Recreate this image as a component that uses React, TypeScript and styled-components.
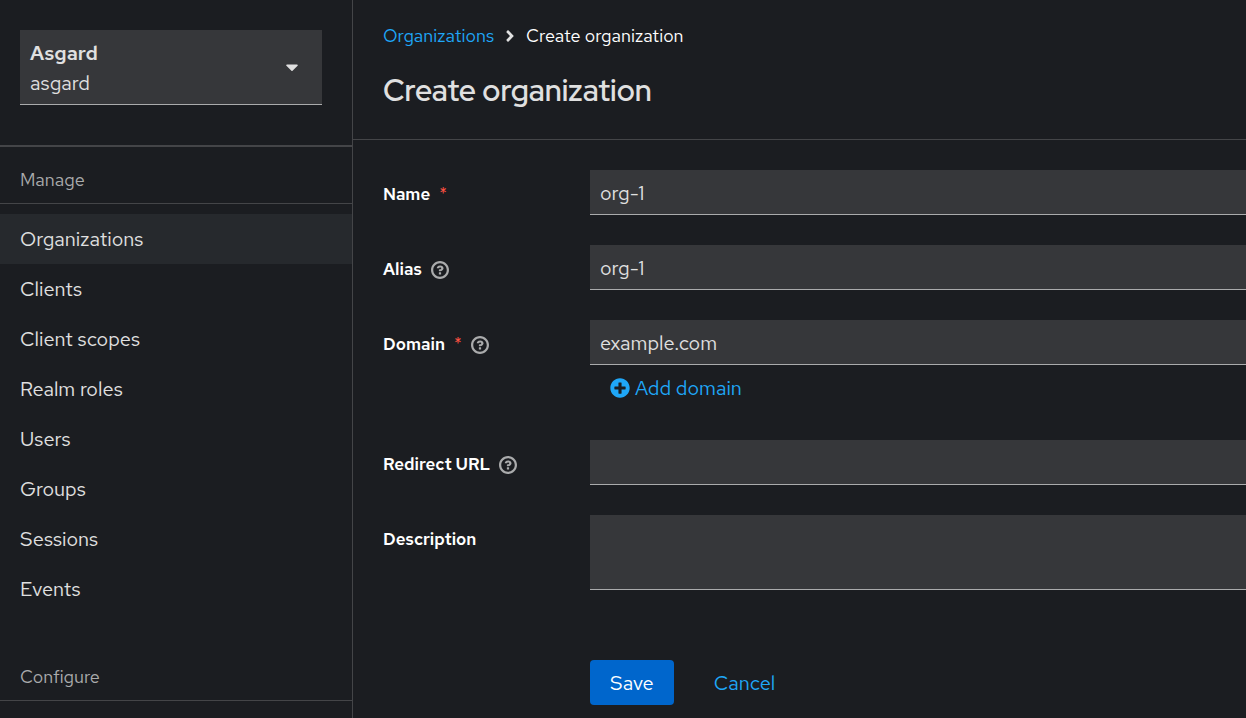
import type { ReactNode } from "react";
import styled, { createGlobalStyle } from "styled-components";
import { FaAngleRight, FaCaretDown, FaPlusCircle } from "react-icons/fa";

const color = {
  page: "#1b1d21",
  field: "#36373a",
  selected: "#26292d",
  line: "#444548",
  fieldLine: "#aaabac",
  text: "#e0e0e0",
  muted: "#aaabac",
  link: "#1fa7f8",
  primary: "#0066cc",
  required: "#fe5142",
};

const GlobalStyle = createGlobalStyle`
  *, *::before, *::after { box-sizing: border-box; }
  body {
    margin: 0;
    background: ${color.page};
    color: ${color.text};
    font-family: "Red Hat Text", Lato, sans-serif;
    font-size: 20px;
    line-height: 30px;
  }
  button, input, textarea { font: inherit; color: inherit; }
`;

const Page = styled.div`
  display: flex;
  height: 100vh;
  overflow: hidden;
`;

const Sidebar = styled.aside`
  flex: 0 0 353px;
  border-right: 1px solid ${color.line};
  overflow: hidden;
`;

const RealmArea = styled.div`
  padding: 30px 30px 40px 20px;
  border-bottom: 2px solid ${color.line};
`;

const RealmToggle = styled.button`
  display: flex;
  align-items: center;
  justify-content: space-between;
  width: 100%;
  padding: 8px 20px 6px 10px;
  border: 0;
  border-bottom: 1px solid ${color.fieldLine};
  background: ${color.field};
  text-align: left;

  svg { width: 20px; height: 20px; margin-bottom: 2px; }
`;

const RealmName = styled.span`
  display: flex;
  flex-direction: column;

  strong { font-weight: 600; }
`;

const NavSection = styled.section`
  margin-bottom: 30px;
`;

const NavTitle = styled.h2`
  margin: 0 0 10px;
  padding: 19px 20px 10px;
  border-bottom: 1px solid ${color.line};
  color: ${color.muted};
  font-size: 18px;
  font-weight: 400;
  line-height: 27px;
`;

const NavList = styled.ul`
  margin: 0;
  padding: 0;
  list-style: none;
`;

const NavLink = styled.a<{ $selected?: boolean }>`
  display: block;
  padding: 10px 20px;
  background: ${(p) => (p.$selected ? color.selected : "transparent")};
  color: inherit;
  text-decoration: none;
`;

const Main = styled.main`
  flex: 1;
  min-width: 0;
`;

const Header = styled.header`
  padding: 22px 30px 29px;
  border-bottom: 1px solid ${color.line};
`;

const Breadcrumb = styled.nav`
  display: flex;
  align-items: center;
  gap: 7px;
  color: #fff;
  font-size: 18px;
  line-height: 28px;

  a { color: ${color.link}; text-decoration: none; }
  svg { width: 18px; height: 18px; color: ${color.text}; }
`;

const Title = styled.h1`
  margin: 20px 0 0;
  font-family: "Red Hat Display", Lato, sans-serif;
  font-size: 30px;
  font-weight: 600;
  line-height: 40px;
`;

const Form = styled.form`
  display: flex;
  flex-direction: column;
  gap: 30px;
  padding: 30px 0 13px 30px;
`;

const Row = styled.div`
  display: grid;
  grid-template-columns: 207px 1fr;
`;

const LabelCell = styled.div`
  display: flex;
  align-items: center;
  gap: 9px;
  height: 45px;
  padding-top: 4px;
  color: #fff;
  font-size: 17px;
  font-weight: 600;
  line-height: 27px;
`;

const Required = styled.span`
  color: ${color.required};
  font-weight: 400;
`;

const HelpButton = styled.button`
  display: flex;
  padding: 1px 0 0;
  border: 0;
  background: none;

  svg { width: 18px; height: 18px; fill: ${color.muted}; }
`;

const Control = styled.input`
  display: block;
  width: 100%;
  height: 45px;
  padding: 2px 10px 0;
  border: 0;
  border-bottom: 1px solid ${color.fieldLine};
  border-radius: 0;
  background: ${color.field};
  outline: 0;
`;

const TextArea = styled(Control)`
  height: 75px;
  resize: none;
`;

const LinkButton = styled.button`
  display: flex;
  align-items: center;
  gap: 5px;
  height: 45px;
  padding: 0 20px;
  border: 0;
  background: none;
  color: ${color.link};

  svg { width: 20px; height: 20px; }
`;

const Actions = styled.div`
  display: flex;
  gap: 20px;
  padding: 40px 0 0 207px;
`;

const SaveButton = styled.button`
  height: 45px;
  padding: 0 20px;
  border: 0;
  border-radius: 4px;
  background: ${color.primary};
  color: #fff;
`;

const HelpIcon = () => (
  <svg viewBox="0 0 1024 1024" aria-hidden="true">
    <path d="M521.3 576C627.5 576 713.7 502 713.7 413.7S627.6 253.6 521.3 253.6C366 253.6 334.5 337.7 329.2 407.2c0 7.100 6 8.800 14.300 8.800H445c5.500 0 13-.5 15.800-9.500 0-43.900 122.100-49.400 122.100 7.100 0 28.300-26.700 57.300-61.600 59.400s-74 6.800-74 48.700v32.100c0 17 8.800 22.200 24.700 22.200zM575.300 751.300v-96a16 16 0 0 0-16-16h-96a16 16 0 0 0-16 16v96a16 16 0 0 0 16 16h96a16 16 0 0 0 16-16M512 896C300.200 896 128 723.900 128 512S300.200 128 512 128s384 172.200 384 384-172.300 384-384 384M512 0C229.700 0 0 229.800 0 512s229.700 512 512 512 512-229.700 512-512S794.300 0 512 0" />
  </svg>
);

type FieldProps = {
  id: string;
  label: string;
  required?: boolean;
  help?: boolean;
  children: ReactNode;
};

const Field = ({ id, label, required, help, children }: FieldProps) => (
  <Row>
    <LabelCell>
      <label htmlFor={id}>{label}</label>
      {required && <Required aria-hidden="true">*</Required>}
      {help && (
        <HelpButton type="button" aria-label={`Help for ${label}`}>
          <HelpIcon />
        </HelpButton>
      )}
    </LabelCell>
    <div>{children}</div>
  </Row>
);

const manageItems = [
  "Organizations",
  "Clients",
  "Client scopes",
  "Realm roles",
  "Users",
  "Groups",
  "Sessions",
  "Events",
];

export default function App() {
  return (
    <>
      <GlobalStyle />
      <Page>
        <Sidebar>
          <RealmArea>
            <RealmToggle type="button">
              <RealmName>
                <strong>Asgard</strong>
                <span>asgard</span>
              </RealmName>
              <FaCaretDown aria-hidden />
            </RealmToggle>
          </RealmArea>
          <NavSection>
            <NavTitle>Manage</NavTitle>
            <NavList>
              {manageItems.map((item, i) => (
                <li key={item}>
                  <NavLink href="#" $selected={i === 0}>
                    {item}
                  </NavLink>
                </li>
              ))}
            </NavList>
          </NavSection>
          <NavSection>
            <NavTitle>Configure</NavTitle>
          </NavSection>
        </Sidebar>
        <Main>
          <Header>
            <Breadcrumb aria-label="Breadcrumb">
              <a href="#">Organizations</a>
              <FaAngleRight aria-hidden />
              <span>Create organization</span>
            </Breadcrumb>
            <Title>Create organization</Title>
          </Header>
          <Form>
            <Field id="name" label="Name" required>
              <Control id="name" defaultValue="org-1" />
            </Field>
            <Field id="alias" label="Alias" help>
              <Control id="alias" defaultValue="org-1" />
            </Field>
            <Field id="domain" label="Domain" required help>
              <Control id="domain" defaultValue="example.com" />
              <LinkButton type="button">
                <FaPlusCircle aria-hidden />
                Add domain
              </LinkButton>
            </Field>
            <Field id="redirect" label="Redirect URL" help>
              <Control id="redirect" />
            </Field>
            <Field id="description" label="Description">
              <TextArea as="textarea" id="description" />
            </Field>
            <Actions>
              <SaveButton type="button">Save</SaveButton>
              <LinkButton type="button">Cancel</LinkButton>
            </Actions>
          </Form>
        </Main>
      </Page>
    </>
  );
}
